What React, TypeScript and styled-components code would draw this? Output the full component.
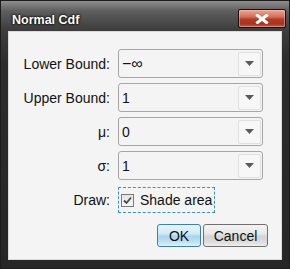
import React, { useState } from "react";
import styled, { createGlobalStyle } from "styled-components";

const GlobalStyle = createGlobalStyle`
  html, body {
    margin: 0;
    padding: 0;
    background: #2a2a2a;
  }
  body {
    font-family: "Liberation Sans", Arial, sans-serif;
  }
`;

type Field = { label: string; value: string };

const fields: Field[] = [
  { label: "Lower Bound:", value: "\u2212\u221E" },
  { label: "Upper Bound:", value: "1" },
  { label: "\u03BC:", value: "0" },
  { label: "\u03C3:", value: "1" },
];

const App: React.FC = () => {
  const [shade, setShade] = useState(true);

  return (
    <>
      <GlobalStyle />
      <Window>
        <TitleBar>
          <Title>Normal Cdf</Title>
          <CloseButton aria-label="Close">
            <svg width="14" height="10" viewBox="0 0 14 10">
              <path
                d="M2.5 1.5 L11.5 8.5 M11.5 1.5 L2.5 8.5"
                stroke="#ffffff"
                strokeWidth="3"
                strokeLinecap="square"
              />
            </svg>
          </CloseButton>
        </TitleBar>
        <Client>
          <Form>
            {fields.map((f) => (
              <React.Fragment key={f.label}>
                <Label>{f.label}</Label>
                <Combo>
                  <ComboValue $wide={f.value.includes("\u221E")}>{f.value}</ComboValue>
                  <ComboArrow>
                    <svg width="9" height="5" viewBox="0 0 9 5">
                      <path d="M0 0 H9 L4.5 5 Z" fill="#5a5a5a" />
                    </svg>
                  </ComboArrow>
                </Combo>
              </React.Fragment>
            ))}
            <Label>Draw:</Label>
            <CheckRow onClick={() => setShade(!shade)}>
              <CheckBox>
                {shade && (
                  <svg width="9" height="9" viewBox="0 0 9 9">
                    <path
                      d="M1 4.5 L3.5 7 L8 1.5"
                      stroke="#4a4a4a"
                      strokeWidth="1.8"
                      fill="none"
                    />
                  </svg>
                )}
              </CheckBox>
              <CheckText>Shade area</CheckText>
            </CheckRow>
          </Form>
          <Buttons>
            <DlgButton $primary>OK</DlgButton>
            <DlgButton>Cancel</DlgButton>
          </Buttons>
        </Client>
      </Window>
    </>
  );
};

export default App;

const Window = styled.div`
  width: 290px;
  height: 269px;
  box-sizing: border-box;
  display: flex;
  flex-direction: column;
  background: linear-gradient(180deg, #8e8e8e 0px, #5e5e5e 10px, #3e3e3e 28px, #2c2c2c 60px, #262626 100%);
  border: 1px solid #1c1c1c;
  padding: 0 7px 8px;
`;

const TitleBar = styled.div`
  height: 30px;
  display: flex;
  align-items: flex-start;
  justify-content: space-between;
`;

const Title = styled.div`
  margin: 12px 0 0 4px;
  color: #ffffff;
  font-weight: bold;
  font-size: 12.5px;
  line-height: 14px;
  text-shadow: 0 0 3px #000, 0 0 2px #000;
`;

const CloseButton = styled.div`
  margin: 8px -4px 0 0;
  width: 46px;
  height: 17px;
  border: 1px solid #111;
  border-radius: 2px;
  background: linear-gradient(180deg, #e9a898 0%, #d3705c 40%, #b23c24 55%, #a6351f 80%, #c25a3c 100%);
  box-shadow: inset 0 0 0 1px rgba(255, 200, 190, 0.45);
  display: flex;
  align-items: center;
  justify-content: center;
`;

const Client = styled.div`
  flex: 1;
  background: #f4f4f4;
  border: 1px solid #dadada;
  display: flex;
  flex-direction: column;
  padding: 17px 0 0;
`;

const Form = styled.div`
  display: grid;
  grid-template-columns: 101px 145px;
  column-gap: 8px;
  row-gap: 5px;
  align-items: center;
`;

const Label = styled.div`
  text-align: right;
  font-size: 14px;
  color: #111;
  padding-top: 1px;
`;

const Combo = styled.div`
  height: 29px;
  box-sizing: border-box;
  border: 1px solid #a6a6a6;
  border-radius: 3px;
  background: #f4f4f4;
  display: flex;
  align-items: center;
  justify-content: space-between;
  padding: 1px 1px 1px 3px;
`;

const ComboValue = styled.span<{ $wide?: boolean }>`
  font-size: ${(p) => (p.$wide ? "16px" : "14px")};
  color: #111;
`;

const ComboArrow = styled.div`
  width: 23px;
  height: 24px;
  box-sizing: border-box;
  border: 1px solid #e0e0e0;
  border-radius: 2px;
  background: #f7f7f7;
  display: flex;
  align-items: center;
  justify-content: center;
`;

const CheckRow = styled.div`
  margin-top: 2px;
  justify-self: start;
  display: flex;
  align-items: center;
  gap: 6px;
  height: 26px;
  box-sizing: border-box;
  padding: 0 2px 0 2px;
  border: 1px dashed #3b8fc2;
  cursor: default;
`;

const CheckBox = styled.div`
  width: 13px;
  height: 13px;
  box-sizing: border-box;
  border: 1px solid #7a7a7a;
  background: linear-gradient(180deg, #e4e4e4, #f8f8f8);
  display: flex;
  align-items: center;
  justify-content: center;
`;

const CheckText = styled.span`
  font-size: 14px;
  color: #111;
`;

const Buttons = styled.div`
  margin-top: 11px;
  display: flex;
  justify-content: flex-end;
  gap: 2px;
  padding-right: 13px;
`;

const DlgButton = styled.div<{ $primary?: boolean }>`
  height: 23px;
  min-width: ${(p) => (p.$primary ? "44px" : "65px")};
  box-sizing: border-box;
  border: 1px solid ${(p) => (p.$primary ? "#3c7fb1" : "#707070")};
  border-radius: 3px;
  font-size: 14px;
  color: #111;
  display: flex;
  align-items: center;
  justify-content: center;
  background: ${(p) =>
    p.$primary
      ? "linear-gradient(180deg, #e6f4fc 0%, #d2ebf8 40%, #a9d5ee 55%, #bfe0f2 80%, #e0f1fb 100%)"
      : "linear-gradient(180deg, #f4f4f4 0%, #e8e8e8 40%, #d4d4d4 55%, #dcdcdc 80%, #eeeeee 100%)"};
`;
